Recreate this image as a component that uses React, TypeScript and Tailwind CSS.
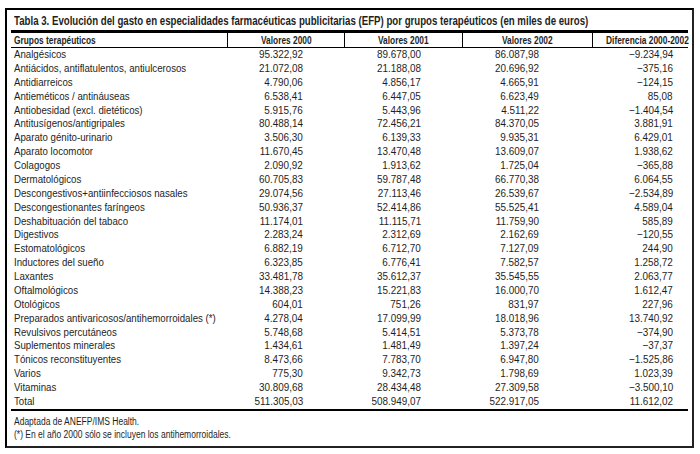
const rows: [string, string, string, string, string][] = [
  ["Analgésicos", "95.322,92", "89.678,00", "86.087,98", "−9.234,94"],
  ["Antiácidos, antiflatulentos, antiulcerosos", "21.072,08", "21.188,08", "20.696,92", "−375,16"],
  ["Antidiarreicos", "4.790,06", "4.856,17", "4.665,91", "−124,15"],
  ["Antieméticos / antináuseas", "6.538,41", "6.447,05", "6.623,49", "85,08"],
  ["Antiobesidad (excl. dietéticos)", "5.915,76", "5.443,96", "4.511,22", "−1.404,54"],
  ["Antitusígenos/antigripales", "80.488,14", "72.456,21", "84.370,05", "3.881,91"],
  ["Aparato génito-urinario", "3.506,30", "6.139,33", "9.935,31", "6.429,01"],
  ["Aparato locomotor", "11.670,45", "13.470,48", "13.609,07", "1.938,62"],
  ["Colagogos", "2.090,92", "1.913,62", "1.725,04", "−365,88"],
  ["Dermatológicos", "60.705,83", "59.787,48", "66.770,38", "6.064,55"],
  ["Descongestivos+antiinfecciosos nasales", "29.074,56", "27.113,46", "26.539,67", "−2.534,89"],
  ["Descongestionantes faríngeos", "50.936,37", "52.414,86", "55.525,41", "4.589,04"],
  ["Deshabituación del tabaco", "11.174,01", "11.115,71", "11.759,90", "585,89"],
  ["Digestivos", "2.283,24", "2.312,69", "2.162,69", "−120,55"],
  ["Estomatológicos", "6.882,19", "6.712,70", "7.127,09", "244,90"],
  ["Inductores del sueño", "6.323,85", "6.776,41", "7.582,57", "1.258,72"],
  ["Laxantes", "33.481,78", "35.612,37", "35.545,55", "2.063,77"],
  ["Oftalmológicos", "14.388,23", "15.221,83", "16.000,70", "1.612,47"],
  ["Otológicos", "604,01", "751,26", "831,97", "227,96"],
  ["Preparados antivaricosos/antihemorroidales (*)", "4.278,04", "17.099,99", "18.018,96", "13.740,92"],
  ["Revulsivos percutáneos", "5.748,68", "5.414,51", "5.373,78", "−374,90"],
  ["Suplementos minerales", "1.434,61", "1.481,49", "1.397,24", "−37,37"],
  ["Tónicos reconstituyentes", "8.473,66", "7.783,70", "6.947,80", "−1.525,86"],
  ["Varios", "775,30", "9.342,73", "1.798,69", "1.023,39"],
  ["Vitaminas", "30.809,68", "28.434,48", "27.309,58", "−3.500,10"],
  ["Total", "511.305,03", "508.949,07", "522.917,05", "11.612,02"],
];

const cols = "grid grid-cols-[216px_117px_118px_130px_96px]";

// the print face is a condensed grotesque; squeeze Liberation Sans to match
const HeadCell = ({ children }: { children: string }) => (
  <div className="border-l border-black text-center">
    <span className="inline-block scale-x-[0.76] origin-center">{children}</span>
  </div>
);

const Num = ({ v, pad }: { v: string; pad: string }) => (
  <div className={`text-right ${pad}`}>
    <span className="inline-block scale-x-[0.9] origin-right">{v}</span>
  </div>
);

export default function App() {
  return (
    <div className="w-[700px] h-[454px] bg-white pt-[8px] pl-[5px] font-['Liberation_Sans',Arial,sans-serif] text-[#1e1e1e] overflow-hidden">
      <div className="w-[689px] h-[440px] border-2 border-black border-r-[#222] border-b-[#222] px-[4px] pt-[2px] flex flex-col">
        {/* Title */}
        <div className="h-[18px] pl-[3px] text-[12px] font-bold leading-[18px] whitespace-nowrap">
          <span className="inline-block scale-x-[0.805] origin-left">
            Tabla 3. Evolución del gasto en especialidades farmacéuticas publicitarias (EFP) por grupos terapéuticos (en miles de euros)
          </span>
        </div>
        <div className="h-[3px] bg-black" />

        {/* Header */}
        <div className={`${cols} h-[15px] border-b border-black text-[11px] font-bold leading-[14px] whitespace-nowrap`}>
          <div className="pl-[3px]">
            <span className="inline-block scale-x-[0.76] origin-left">Grupos terapéuticos</span>
          </div>
          <HeadCell>Valores 2000</HeadCell>
          <HeadCell>Valores 2001</HeadCell>
          <HeadCell>Valores 2002</HeadCell>
          <HeadCell>Diferencia 2000-2002</HeadCell>
        </div>

        {/* Body */}
        <div className="border-b-2 border-black">
          {rows.map((r) => (
            <div key={r[0]} className={`${cols} h-[13.88px] text-[11px] leading-[13.88px] whitespace-nowrap`}>
              <div className="pl-[3px]">
                <span className="inline-block scale-x-[0.88] origin-left">{r[0]}</span>
              </div>
              <Num v={r[1]} pad="pr-[41px]" />
              <Num v={r[2]} pad="pr-[41px]" />
              <Num v={r[3]} pad="pr-[53px]" />
              <Num v={r[4]} pad="pr-[15px]" />
            </div>
          ))}
        </div>

        {/* Notes */}
        <div className="pl-[3px] pt-[4px] text-[10px] leading-[13px] whitespace-nowrap">
          <div>
            <span className="inline-block scale-x-[0.85] origin-left">Adaptada de ANEFP/IMS Health.</span>
          </div>
          <div>
            <span className="inline-block scale-x-[0.85] origin-left">(*) En el año 2000 sólo se incluyen los antihemorroidales.</span>
          </div>
        </div>
      </div>
    </div>
  );
}
